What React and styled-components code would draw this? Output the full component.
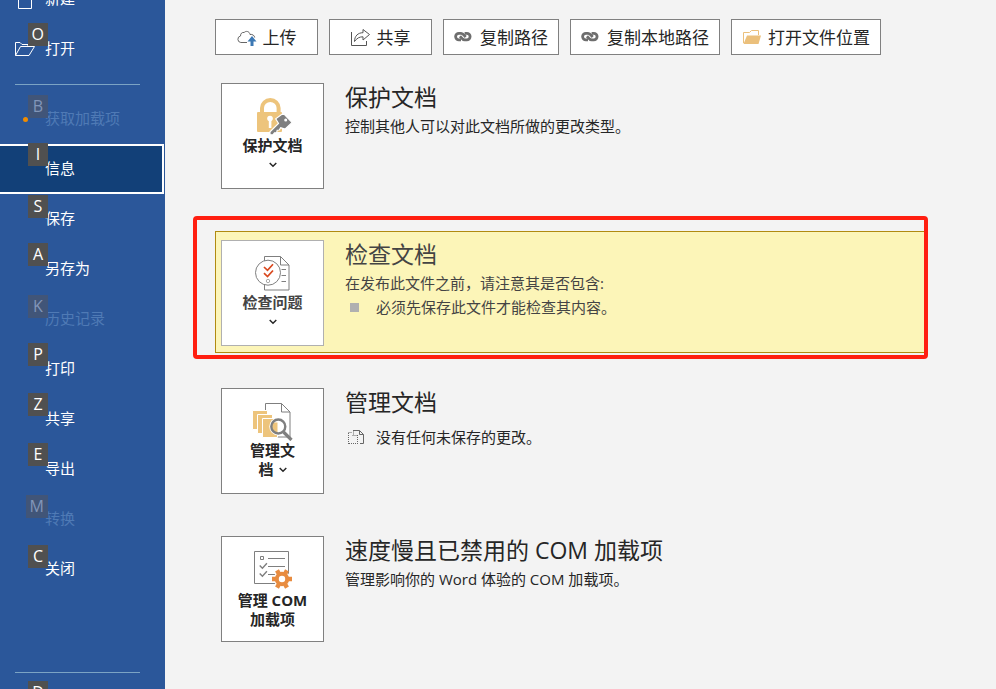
import React from "react";
import styled, { createGlobalStyle, css } from "styled-components";

const GlobalStyle = createGlobalStyle`
  * {
    box-sizing: border-box;
  }
  body {
    margin: 0;
    background-color: #f3f3f3;
    color: #262626;
    font-family: "Open Sans", "Noto Sans CJK SC", sans-serif;
    font-size: 15px;
  }
  button {
    font-family: inherit;
    color: inherit;
    cursor: pointer;
  }
  svg {
    display: block;
    flex-shrink: 0;
  }
`;

const Page = styled.div`
  display: flex;
  height: 100vh;
  overflow: hidden;
`;

const Sidebar = styled.nav`
  flex: 0 0 165px;
  background-color: #2b579a;
  overflow: hidden;
`;

const NavList = styled.ul`
  list-style-type: none;
  margin: ${({ $footer }) => ($footer ? "78px 0 0" : "-26px 0 0")};
  padding: 0;
`;

const NavButton = styled.button`
  position: relative;
  display: flex;
  align-items: center;
  width: 100%;
  height: 50px;
  padding: 0 0 0 15px;
  border: none;
  background: none;
  color: #ffffff;
  font-size: 15px;
  &:disabled {
    color: #4f7ab5;
    cursor: default;
  }
  ${({ $active }) =>
    $active &&
    css`
      width: 164px;
      border: 2px solid #ffffff;
      border-left: none;
      background-color: #124078;
    `}
`;

const NavIcon = styled.span`
  display: flex;
  justify-content: center;
  width: 20px;
  margin-right: 10px;
`;

const NavLabel = styled.span`
  padding-bottom: 4px;
`;

const Dot = styled.span`
  width: 5px;
  height: 5px;
  border-radius: 50%;
  background-color: #f08c00;
`;

const KeyTip = styled.span`
  position: absolute;
  top: ${({ $low }) => ($low ? "1px" : "-1px")};
  right: 117px;
  min-width: 20px;
  height: 23px;
  padding: 0 4px;
  background-color: #505050;
  color: #ffffff;
  font-size: 16px;
  line-height: 23px;
  text-align: center;
  ${NavButton}:disabled & {
    background-color: #415578;
    color: #8296b9;
  }
  ${({ $active }) =>
    $active &&
    css`
      top: -3px;
      right: 114px;
    `}
`;

const Divider = styled.li`
  height: 1px;
  margin: 10px 25px 9px 15px;
  background-color: #7ba3c4;
`;

const Content = styled.main`
  flex: 1;
  min-width: 0;
  padding: 19px 68px 0 50px;
`;

const Toolbar = styled.div`
  display: flex;
  gap: 11px;
  margin-right: -60px;
`;

const ToolButton = styled.button`
  display: flex;
  align-items: center;
  justify-content: center;
  gap: 6px;
  min-width: 103px;
  height: 36px;
  padding: 0 10px 2px;
  border: 1px solid #808080;
  background-color: #ffffff;
  font-size: 17px;
  white-space: nowrap;
`;

const Section = styled.section`
  display: flex;
  gap: 21px;
  padding: 0 6px;
  margin-top: ${({ $gap }) => $gap}px;
  ${({ $highlighted }) =>
    $highlighted &&
    css`
      padding: 8px 5px 6px;
      border: 1px solid #b08a10;
      border-right: none;
      background-color: #fcf5b8;
      color: #444444;
    `}
`;

const Callout = styled.div`
  margin: 27px 0 0 -22px;
  padding: 11px 0 2px 18px;
  border: 4px solid #ff1e10;
  border-radius: 4px;
`;

const Tile = styled.button`
  display: flex;
  flex-direction: column;
  align-items: center;
  flex: 0 0 103px;
  height: 106px;
  padding: 14px 8px 0;
  border: 1px solid ${({ $light }) => ($light ? "#b0b0b0" : "#808080")};
  background-color: #ffffff;
  font-size: 15px;
  font-weight: 700;
  line-height: 19px;
`;

const TileLine = styled.span`
  display: flex;
  align-items: center;
  gap: 5px;
  height: 19px;
  white-space: nowrap;
`;

const Title = styled.h2`
  margin: 0;
  font-size: 23px;
  font-weight: 400;
  line-height: 28px;
`;

const Text = styled.p`
  margin: 3px 0 0;
  line-height: 24px;
`;

const NoteList = styled.ul`
  list-style-type: none;
  margin: ${({ $spaced }) => ($spaced ? "9px" : "0")} 0 0;
  padding: 0;
`;

const Note = styled.li`
  display: flex;
  align-items: center;
  line-height: 24px;
`;

const NoteMark = styled.span`
  display: flex;
  width: 31px;
  padding-left: ${({ $inset }) => $inset}px;
`;

const Bullet = styled.span`
  width: 9px;
  height: 9px;
  background-color: #b0b0b0;
`;

const NewIcon = () => (
  <svg width="20" height="20" viewBox="0 0 20 20" fill="none" stroke="#fff">
    <path d="M3.5 .5h9l4 4v15h-13z" />
  </svg>
);

const OpenIcon = () => (
  <svg width="20" height="16" viewBox="0 0 20 16" fill="none" stroke="#fff">
    <path d="M.5 14.500V1.500h4.500l2 2h6V5.500M.5 14.500l5-9h14l-5.500 9z" />
  </svg>
);

const UploadIcon = () => (
  <svg width="20" height="20" viewBox="0 0 20 20" fill="none">
    <path
      d="M10 16.500H3.800A3.300 3.300 0 0 1 3.500 10C3.500 7.500 5 6 7.200 6.500C8.500 4.700 12.500 5 13 8.500C15.500 8 17.500 9.500 17.700 11.500"
      stroke="#666"
    />
    <path d="M15 10l4.500 5.500h-3V20h-3v-4.500h-3z" fill="#3c78b4" />
  </svg>
);

const ShareIcon = () => (
  <svg width="20" height="20" viewBox="0 0 20 20" fill="none" stroke="#555">
    <path d="M.5 6v13.500h15V15" />
    <path d="M3.500 15.500C3.500 10 7 6.700 12 6.700V3.500l6.500 5-6.500 5.500V10.800C8.500 10.800 6 12 3.500 15.500z" />
  </svg>
);

const LinkIcon = () => (
  <svg width="20" height="20" viewBox="0 0 20 20" fill="none" stroke="#6e6e6e" strokeWidth="2.800">
    <path d="M7 13.900H4.900a3.300 3.300 0 0 1 0-6.600h2.200c2.200 0 2.900 1.900 4.600 3.700" />
    <path d="M10.600 7.300h2.200a3.300 3.300 0 0 1 0 6.600h-2.200c-2.200 0-2.900-1.900-4.600-3.700" />
  </svg>
);

const FolderIcon = () => (
  <svg width="20" height="20" viewBox="0 0 20 20">
    <path d="M1.500 17V6.500h6l2-2h7V9" fill="none" stroke="#ebc07c" />
    <path d="M5 9.500h14L16.500 18H1.500z" fill="#ebc07c" />
  </svg>
);

const Chevron = () => (
  <svg width="8" height="6" viewBox="0 0 8 6" fill="none" stroke="#262626" strokeWidth="1.500">
    <path d="M.7 1L4 4.200 7.300 1" />
  </svg>
);

const LockIcon = () => (
  <svg width="41" height="38" viewBox="0 0 41 38">
    <path d="M10 15V10a8.300 8 0 0 1 16.600 0v5" fill="none" stroke="#edc47c" strokeWidth="4" />
    <rect x="5" y="14" width="25" height="20" rx="1" fill="#edc47c" />
    <circle cx="18" cy="20.500" r="2.800" fill="#fff" />
    <path d="M16.800 21h2.600v9h-2.600z" fill="#fff" />
    <path
      d="M31.300 15.300l8.900 9.200-7 6.500-4.500-1.200-1.500 2.200-2 .2-.5 2.300-2.200.3-1.500 2h-3v-3l8.500-8.500-2.800-4.500z"
      fill="#7f7f7f"
      stroke="#fff"
      strokeWidth="1.200"
    />
    <circle cx="33.700" cy="22" r="1.500" fill="#fff" />
  </svg>
);

const InspectIcon = () => (
  <svg width="41" height="38" viewBox="0 0 41 38" fill="none" stroke="#7f7f7f">
    <path d="M12.500 1.500H28.500l8.500 8.500v25H12.500zM28.500 1.500V10H37" fill="#fff" />
    <path d="M29.500 14.500h4.500M29.500 20.500h4.500M29.500 26.500h4.500" />
    <circle cx="16" cy="17.700" r="12.500" fill="#fff" />
    <circle cx="16" cy="26" r="1.700" stroke="#aaa" />
    <path
      d="M12 12l3.500 3.300 5.500-6M12 18.200l3.500 3.300 5.500-6"
      stroke="#d9481e"
      strokeWidth="1.700"
    />
  </svg>
);

const ManageIcon = () => (
  <svg width="41" height="38" viewBox="0 0 41 38">
    <path d="M13.500 .5H29.500l8.500 8.500v25H13.500zM29.500 .5V9H38" fill="#fff" stroke="#7f7f7f" />
    <g fill="#edc47c" stroke="#fff">
      <path d="M.5 7.500h15v19H.5z" />
      <path d="M5.500 11.500h15v19h-15z" />
      <path d="M10.500 15.500h15v19h-15z" />
    </g>
    <circle cx="26.300" cy="23.500" r="9" fill="#fff" />
    <path d="M31.500 29l8 8" stroke="#7f7f7f" strokeWidth="3.200" />
    <path d="M20 19.500h5.500v10h-3c-2-2-3-5-2.500-10z" fill="#edc47c" />
    <circle cx="26.300" cy="23.500" r="7" fill="none" stroke="#7f7f7f" strokeWidth="2.400" />
  </svg>
);

const AddinsIcon = () => (
  <svg width="41" height="40" viewBox="0 0 41 40" fill="none" stroke="#7f7f7f">
    <path d="M2.500 .5h34v32h-34z" />
    <path d="M8.500 5.500h3v3h-3zM16 7.500h17M16 15.500h17M16 23.500h10" />
    <path d="M7.700 14.500l2.700 2.700 4.500-5M7.700 22.500l2.700 2.700 4.500-5" strokeWidth="1.400" />
    <circle cx="30" cy="28" r="8.500" fill="#fff" stroke="none" />
    <circle cx="30" cy="28" r="5.200" stroke="#e88c40" strokeWidth="4" />
    <g stroke="#e88c40" strokeWidth="4.400">
      <path d="M20 28h4M36 28h4M25 19.300l2 3.500M33 33.200l2 3.500M35 19.300l-2 3.500M27 33.200l-2 3.500" />
    </g>
  </svg>
);

const DraftIcon = () => (
  <svg width="16" height="16" viewBox="0 0 16 16" fill="none" stroke="#666">
    <path d="M5 1.500h6.500l4 4v9H12M11.500 1.500v4h4" />
    <path d="M5.500 5.500v-4M.5 3.500h4M.5 4v11M1 14.500h9M9.500 6v8M4.500 6.500h5" strokeDasharray="1 1" />
  </svg>
);

const navItems = [
  { label: "新建", icon: <NewIcon /> },
  { label: "打开", tip: "O", icon: <OpenIcon /> },
  { divider: true },
  { label: "获取加载项", tip: "B", icon: <Dot />, low: true, disabled: true },
  { label: "信息", tip: "I", active: true },
  { label: "保存", tip: "S", low: true },
  { label: "另存为", tip: "A" },
  { label: "历史记录", tip: "K", low: true, disabled: true },
  { label: "打印", tip: "P" },
  { label: "共享", tip: "Z" },
  { label: "导出", tip: "E" },
  { label: "转换", tip: "M", low: true, disabled: true },
  { label: "关闭", tip: "C", low: true },
];

const tools = [
  { label: "上传", icon: <UploadIcon /> },
  { label: "共享", icon: <ShareIcon /> },
  { label: "复制路径", icon: <LinkIcon /> },
  { label: "复制本地路径", icon: <LinkIcon /> },
  { label: "打开文件位置", icon: <FolderIcon /> },
];

const NavItem = ({ label, tip, icon, low, active, disabled }) => (
  <li>
    <NavButton $active={active} disabled={disabled} aria-current={active && "page"}>
      <NavIcon>{icon}</NavIcon>
      <NavLabel>{label}</NavLabel>
      {tip && (
        <KeyTip $low={low} $active={active}>
          {tip}
        </KeyTip>
      )}
    </NavButton>
  </li>
);

export default function App() {
  return (
    <>
      <GlobalStyle />
      <Page>
        <Sidebar>
          <NavList>
            {navItems.map((item, i) =>
              item.divider ? <Divider key={i} role="separator" /> : <NavItem key={item.label} {...item} />
            )}
          </NavList>
          <NavList $footer>
            <Divider role="separator" />
            <NavItem tip="D" />
          </NavList>
        </Sidebar>
        <Content>
          <Toolbar>
            {tools.map(t => (
              <ToolButton key={t.label}>
                {t.icon}
                {t.label}
              </ToolButton>
            ))}
          </Toolbar>

          <Section $gap={28}>
            <Tile>
              <LockIcon />
              <TileLine>保护文档</TileLine>
              <TileLine>
                <Chevron />
              </TileLine>
            </Tile>
            <div>
              <Title>保护文档</Title>
              <Text>控制其他人可以对此文档所做的更改类型。</Text>
            </div>
          </Section>

          <Callout>
            <Section $highlighted $gap={0}>
              <Tile $light>
                <InspectIcon />
                <TileLine>检查问题</TileLine>
                <TileLine>
                  <Chevron />
                </TileLine>
              </Tile>
              <div>
                <Title>检查文档</Title>
                <Text>在发布此文件之前，请注意其是否包含:</Text>
                <NoteList>
                  <Note>
                    <NoteMark $inset={5}>
                      <Bullet />
                    </NoteMark>
                    必须先保存此文件才能检查其内容。
                  </Note>
                </NoteList>
              </div>
            </Section>
          </Callout>

          <Section $gap={29}>
            <Tile>
              <ManageIcon />
              <TileLine>管理文</TileLine>
              <TileLine>
                档
                <Chevron />
              </TileLine>
            </Tile>
            <div>
              <Title>管理文档</Title>
              <NoteList $spaced>
                <Note>
                  <NoteMark $inset={3}>
                    <DraftIcon />
                  </NoteMark>
                  没有任何未保存的更改。
                </Note>
              </NoteList>
            </div>
          </Section>

          <Section $gap={42}>
            <Tile>
              <AddinsIcon />
              <TileLine>管理 COM</TileLine>
              <TileLine>加载项</TileLine>
            </Tile>
            <div>
              <Title>速度慢且已禁用的 COM 加载项</Title>
              <Text>管理影响你的 Word 体验的 COM 加载项。</Text>
            </div>
          </Section>
        </Content>
      </Page>
    </>
  );
}
